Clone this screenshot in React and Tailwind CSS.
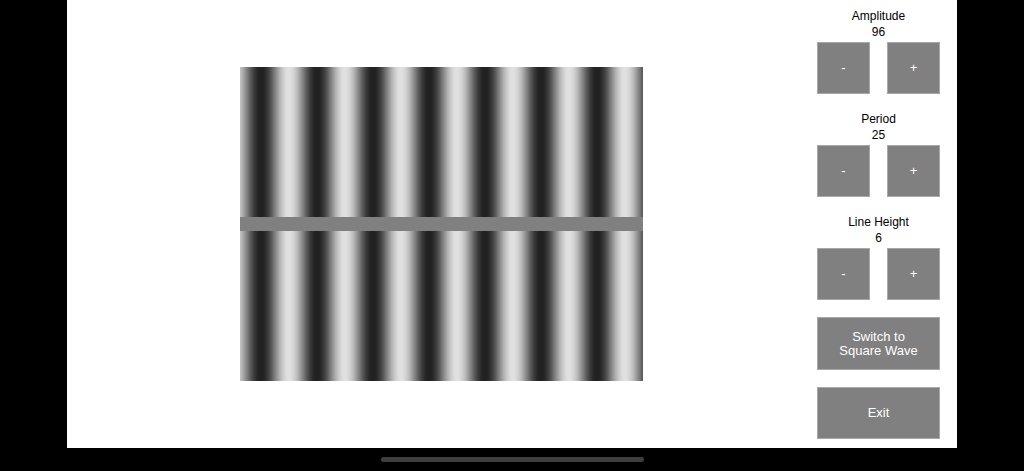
import React from "react";

const W = 403;
const H = 314;
const PERIOD = 56;
const DARK_AT = 21;

function Grating() {
  const stops = [];
  for (let x = 0; x <= W; x += 1) {
    const v = Math.round(128 - 96 * Math.cos((2 * Math.PI * (x - DARK_AT)) / PERIOD));
    stops.push(
      <stop key={x} offset={x / W} stopColor={`rgb(${v},${v},${v})`} />
    );
  }
  return (
    <svg width={W} height={H} viewBox={`0 0 ${W} ${H}`} className="block">
      <defs>
        <linearGradient id="grat" x1="0" y1="0" x2={W} y2="0" gradientUnits="userSpaceOnUse">
          {stops}
        </linearGradient>
      </defs>
      <rect x="0" y="0" width={W} height={H} fill="url(#grat)" />
      <rect x="0" y="150" width={W} height="14" fill="#808080" />
    </svg>
  );
}

function GBtn({ children, className = "" }) {
  return (
    <div
      className={
        "flex items-center justify-center bg-[#808080] border border-[#a8a8a8] text-white text-[13px] leading-[14px] text-center " +
        className
      }
    >
      {children}
    </div>
  );
}

function Control({ label, value, first }) {
  return (
    <div className={"flex flex-col items-center " + (first ? "" : "mt-[17px]")}>
      <div className="text-[12px] leading-[16px] text-black">{label}</div>
      <div className="text-[12px] leading-[16px] text-black">{value}</div>
      <div className="flex gap-[17px] mt-[2px]">
        <GBtn className="w-[53px] h-[52px]">-</GBtn>
        <GBtn className="w-[53px] h-[52px]">+</GBtn>
      </div>
    </div>
  );
}

export default function App() {
  return (
    <div
      className="w-[1024px] h-[471px] bg-black flex flex-col overflow-hidden"
      style={{ fontFamily: '"Liberation Sans", Arial, sans-serif' }}
    >
      <div className="ml-[67px] w-[890px] h-[448px] bg-white flex">
        <div className="flex-1 flex items-center pl-[173px]">
          <Grating />
        </div>
        <div className="w-[123px] mr-[17px] pt-[8px] flex flex-col">
          <Control label="Amplitude" value="96" first />
          <Control label="Period" value="25" />
          <Control label="Line Height" value="6" />
          <GBtn className="w-[123px] h-[53px] mt-[17px]">
            Switch to
            <br />
            Square Wave
          </GBtn>
          <GBtn className="w-[123px] h-[52px] mt-[17px]">Exit</GBtn>
        </div>
      </div>
      <div className="mt-[9px] mx-auto w-[263px] h-[5px] rounded-full bg-[#3f3f3f]" />
    </div>
  );
}
